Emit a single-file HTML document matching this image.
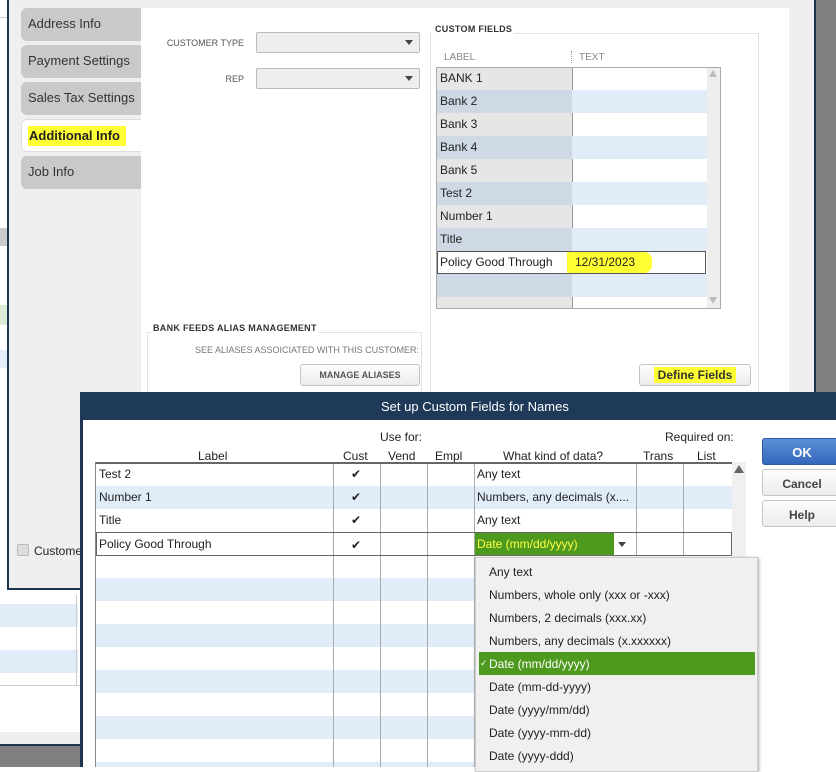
<!DOCTYPE html>
<html><head><style>
*{box-sizing:border-box;margin:0;padding:0}
body{width:836px;height:767px;overflow:hidden;position:relative;background:#fff;font-family:"Liberation Sans",Arial,sans-serif;font-size:12px;color:#222}
.a{position:absolute}
.tab{position:absolute;left:21px;width:120px;height:33px;background:#c9c9c9;border-radius:6px 0 0 6px;font-size:13px;padding:8px 0 0 7px;color:#333}
.row{position:absolute;height:23px;font-size:12px;padding:4px 0 0 3px}
.hl{background:#ffff33}
.btn{position:absolute;border:1px solid #c4c4c4;border-radius:3px;background:linear-gradient(#fdfdfd,#ececec);text-align:center;color:#444}
.vl{position:absolute;width:1px;background:#aaa}
</style></head><body>
<div class="a" style="left:0;top:0;width:7px;height:590px;background:#fff"></div>
<div class="a" style="left:0;top:17px;width:7px;height:1px;background:#ccc"></div>
<div class="a" style="left:0;top:228px;width:7px;height:18px;background:#ccc"></div>
<div class="a" style="left:0;top:305px;width:7px;height:20px;background:#dcebd6"></div>
<div class="a" style="left:0;top:350px;width:7px;height:18px;background:#e6eefa"></div>
<div class="a" style="left:7px;top:0;width:809px;height:590px;background:#efefef;border-left:2px solid #1d3550;border-bottom:2px solid #1d3550;border-right:2px solid #1d3550"></div>
<div class="a" style="left:816px;top:0;width:20px;height:392px;background:#808080"></div>
<div class="a" style="left:141px;top:8px;width:648px;height:384px;background:#fff"></div>
<div class="tab" style="top:8px">Address Info</div>
<div class="tab" style="top:45px">Payment Settings</div>
<div class="tab" style="top:82px">Sales Tax Settings</div>
<div class="tab" style="top:119px;background:#fff;border:1px solid #ddd;border-right:none;font-weight:bold;color:#222;padding:8px 0 0 6px"><span class="hl" style="padding:2px 6px 3px 1px">Additional Info</span></div>
<div class="tab" style="top:156px">Job Info</div>
<div class="a" style="left:160px;top:38px;width:84px;text-align:right;font-size:9px;color:#555">CUSTOMER TYPE</div>
<div class="a" style="left:160px;top:74px;width:84px;text-align:right;font-size:9px;color:#555">REP</div>
<div class="a" style="left:256px;top:32px;width:164px;height:21px;background:#eee;border:1px solid #bbb;border-radius:2px"><span class="a" style="right:6px;top:7px;border:4px solid transparent;border-top:5px solid #444"></span></div>
<div class="a" style="left:256px;top:68px;width:164px;height:21px;background:#eee;border:1px solid #bbb;border-radius:2px"><span class="a" style="right:6px;top:7px;border:4px solid transparent;border-top:5px solid #444"></span></div>
<div class="a" style="left:430px;top:33px;width:329px;height:365px;border:1px solid #e2e2e2"></div>
<div class="a" style="left:433px;top:24px;background:#fff;padding:0 2px;font-size:9px;font-weight:bold;color:#333;letter-spacing:.3px">CUSTOM FIELDS</div>
<div class="a" style="left:444px;top:52px;font-size:10px;color:#888">LABEL</div>
<div class="a" style="left:571px;top:51px;height:12px;border-left:1px dotted #999"></div>
<div class="a" style="left:579px;top:52px;font-size:10px;color:#888">TEXT</div>
<div class="a" style="left:436px;top:67px;width:285px;height:242px;border:1px solid #aaa;background:#e6e6e6;overflow:hidden">
<div class="a" style="left:135px;top:0;width:135px;height:242px;background:#fff;border-left:1px solid #999"></div>
</div>
<div class="a" style="left:707px;top:68px;width:13px;height:240px;background:#eee"></div>
<div class="a" style="left:709px;top:70px;border:4px solid transparent;border-bottom:7px solid #bbb;border-top:0"></div>
<div class="a" style="left:709px;top:297px;border:4px solid transparent;border-top:7px solid #bbb;border-bottom:0"></div>
<div class="row" style="left:437px;top:67px">BANK 1</div>
<div class="row" style="left:437px;top:90px;width:135px;background:#cfd9e6">Bank 2</div><div class="a" style="left:572px;top:90px;width:135px;height:23px;background:#e1ecf9"></div>
<div class="row" style="left:437px;top:113px">Bank 3</div>
<div class="row" style="left:437px;top:136px;width:135px;background:#cfd9e6">Bank 4</div><div class="a" style="left:572px;top:136px;width:135px;height:23px;background:#e1ecf9"></div>
<div class="row" style="left:437px;top:159px">Bank 5</div>
<div class="row" style="left:437px;top:182px;width:135px;background:#cfd9e6">Test 2</div><div class="a" style="left:572px;top:182px;width:135px;height:23px;background:#e1ecf9"></div>
<div class="row" style="left:437px;top:205px">Number 1</div>
<div class="row" style="left:437px;top:228px;width:135px;background:#cfd9e6">Title</div><div class="a" style="left:572px;top:228px;width:135px;height:23px;background:#e1ecf9"></div>
<div class="a" style="left:437px;top:251px;width:269px;height:23px;border:1px solid #555;background:#fff;font-size:12px;padding:3px 0 0 2px">Policy Good Through<span class="a hl" style="left:129px;top:0;height:21px;width:85px;padding:3px 0 0 8px;border-radius:0 8px 8px 0">12/31/2023</span></div>
<div class="a" style="left:437px;top:274px;width:135px;height:23px;background:#cfd9e6"></div><div class="a" style="left:572px;top:274px;width:135px;height:23px;background:#e1ecf9"></div>
<div class="a" style="left:147px;top:332px;width:275px;height:66px;border:1px solid #e2e2e2"></div>
<div class="a" style="left:151px;top:323px;background:#fff;padding:0 2px;font-size:9px;font-weight:bold;color:#333;letter-spacing:.3px">BANK FEEDS ALIAS MANAGEMENT</div>
<div class="a" style="left:150px;top:345px;width:269px;text-align:right;font-size:9px;color:#777">SEE ALIASES ASSOICIATED WITH THIS CUSTOMER:</div>
<div class="btn" style="left:300px;top:364px;width:120px;height:22px;font-size:9px;font-weight:bold;padding-top:5px;color:#555">MANAGE ALIASES</div>
<div class="btn" style="left:639px;top:364px;width:112px;height:22px;font-size:12px;font-weight:bold;padding-top:3px;color:#333"><span class="hl" style="padding:1px 4px">Define Fields</span></div>
<div class="a" style="left:17px;top:544px;width:12px;height:12px;border:1px solid #bbb;background:#ddd;border-radius:2px"></div>
<div class="a" style="left:34px;top:544px;font-size:12px">Customer</div>
<div class="a" style="left:0;top:604px;width:78px;height:23px;background:#e1ecf9"></div>
<div class="a" style="left:0;top:650px;width:78px;height:23px;background:#e1ecf9"></div>
<div class="a" style="left:76px;top:595px;width:1px;height:90px;background:#ccc"></div>
<div class="a" style="left:0;top:685px;width:80px;height:1px;background:#ccc"></div>
<div class="a" style="left:0;top:732px;width:80px;height:12px;background:#eee"></div>
<div class="a" style="left:0;top:744px;width:80px;height:2px;background:#1d3550"></div>
<div class="a" style="left:0;top:746px;width:80px;height:21px;background:#808080"></div>
<div class="a" style="left:80px;top:392px;width:756px;height:375px;background:#fff;border-left:3px solid #1d3550"></div>
<div class="a" style="left:80px;top:392px;width:756px;height:28px;background:#1e3a58;border-radius:3px 0 0 0"></div>
<div class="a" style="left:381px;top:399px;color:#fff;font-size:13px">Set up Custom Fields for Names</div>
<div class="a" style="left:380px;top:430px;font-size:12px">Use for:</div>
<div class="a" style="left:665px;top:430px;font-size:12px">Required on:</div>
<div class="a" style="left:198px;top:449px">Label</div>
<div class="a" style="left:343px;top:449px">Cust</div>
<div class="a" style="left:388px;top:449px">Vend</div>
<div class="a" style="left:435px;top:449px">Empl</div>
<div class="a" style="left:503px;top:449px">What kind of data?</div>
<div class="a" style="left:643px;top:449px">Trans</div>
<div class="a" style="left:697px;top:449px">List</div>
<div class="a" style="left:95px;top:462px;width:638px;height:305px;border-left:1px solid #888;border-top:2px solid #666;overflow:hidden">
 <div class="a" style="left:0;top:22px;width:640px;height:23px;background:#e1ecf9"></div>
 <div class="a" style="left:0;top:114px;width:640px;height:23px;background:#e1ecf9"></div>
 <div class="a" style="left:0;top:160px;width:640px;height:23px;background:#e1ecf9"></div>
 <div class="a" style="left:0;top:206px;width:640px;height:23px;background:#e1ecf9"></div>
 <div class="a" style="left:0;top:252px;width:640px;height:23px;background:#e1ecf9"></div>
 <div class="a" style="left:0;top:298px;width:640px;height:23px;background:#e1ecf9"></div>
 <div class="vl" style="left:237px;top:0;height:305px"></div>
 <div class="vl" style="left:284px;top:0;height:305px"></div>
 <div class="vl" style="left:331px;top:0;height:305px"></div>
 <div class="vl" style="left:378px;top:0;height:305px"></div>
 <div class="vl" style="left:540px;top:0;height:92px"></div>
 <div class="vl" style="left:587px;top:0;height:92px"></div>
</div>
<div class="row" style="left:96px;top:463px">Test 2</div>
<div class="row" style="left:96px;top:486px">Number 1</div>
<div class="row" style="left:96px;top:509px">Title</div>
<div class="a" style="left:96px;top:532px;width:636px;height:24px;border:1px solid #666;padding:4px 0 0 2px">Policy Good Through</div>
<div class="a" style="left:351px;top:467px">✔</div>
<div class="a" style="left:351px;top:490px">✔</div>
<div class="a" style="left:351px;top:513px">✔</div>
<div class="a" style="left:351px;top:538px">✔</div>
<div class="row" style="left:474px;top:463px">Any text</div>
<div class="row" style="left:474px;top:486px">Numbers, any decimals (x....</div>
<div class="row" style="left:474px;top:509px">Any text</div>
<div class="a" style="left:475px;top:533px;width:139px;height:22px;background:#4e9a1e;color:#ffff40;padding:4px 0 0 2px">Date (mm/dd/yyyy)</div>
<div class="a" style="left:618px;top:542px;border:4px solid transparent;border-top:5px solid #444"></div>
<div class="a" style="left:732px;top:462px;width:14px;height:305px;background:#f0f0f0"></div>
<div class="a" style="left:734px;top:465px;border:5px solid transparent;border-bottom:8px solid #666;border-top:0"></div>
<div class="btn" style="left:762px;top:438px;width:80px;height:27px;background:linear-gradient(#5b8fd6,#3468bd);border-color:#2d5aa0;color:#fff;font-weight:bold;font-size:13px;padding-top:6px">OK</div>
<div class="btn" style="left:762px;top:469px;width:80px;height:27px;font-weight:bold;font-size:12px;padding-top:7px">Cancel</div>
<div class="btn" style="left:762px;top:500px;width:80px;height:27px;font-weight:bold;font-size:12px;padding-top:7px">Help</div>
<div class="a" style="left:475px;top:557px;width:283px;height:215px;background:#f0f0f0;border:1px solid #ccc;box-shadow:1px 1px 3px #aaa"></div>
<div class="a" style="left:479px;top:652px;width:276px;height:23px;background:#4e9a1e"></div>
<div class="a" style="left:480px;top:658px;color:#fff;font-size:9px">✓</div>
<div class="a" style="left:489px;top:561px;line-height:23px;font-size:12px">Any text<br>Numbers, whole only (xxx or -xxx)<br>Numbers, 2 decimals (xxx.xx)<br>Numbers, any decimals (x.xxxxxx)<br><span style="color:#fff">Date (mm/dd/yyyy)</span><br>Date (mm-dd-yyyy)<br>Date (yyyy/mm/dd)<br>Date (yyyy-mm-dd)<br>Date (yyyy-ddd)</div>
</body></html>
